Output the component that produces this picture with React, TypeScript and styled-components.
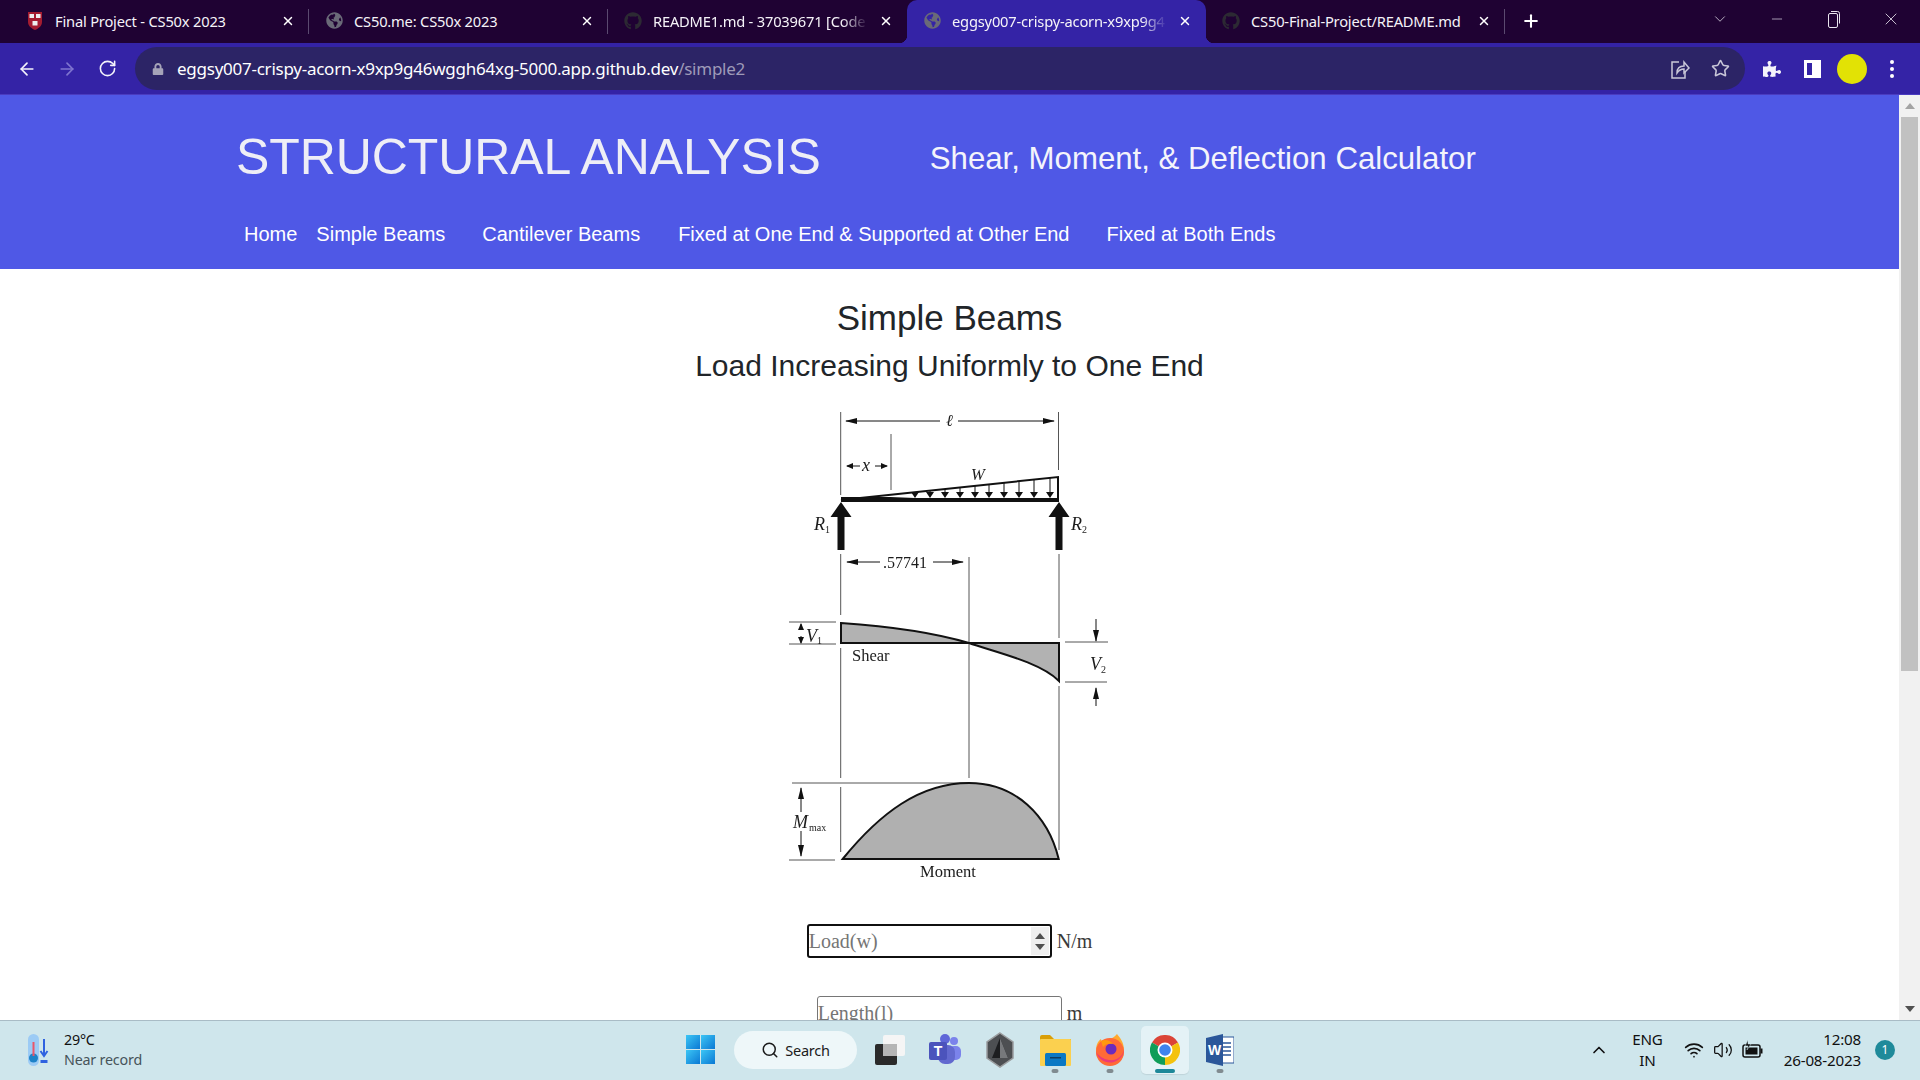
import React, { FC, ReactNode } from 'react'
import styled, { createGlobalStyle } from 'styled-components'
import { ArrowLeft, ArrowRight, RotateCw, Star, X, Plus, Minus, ChevronDown, ChevronUp, Search, Wifi, Volume2 } from 'lucide-react'
import { FaGithub, FaGlobeAmericas, FaLock, FaPuzzlePiece } from 'react-icons/fa'

const GlobalStyle = createGlobalStyle`
  html, body {
    margin: 0;
    padding: 0;
    overflow: hidden;
  }
  * {
    box-sizing: border-box;
  }
`

const Screen = styled.div`
  width: 1920px;
  height: 1080px;
  display: flex;
  flex-direction: column;
  overflow: hidden;
  background: white;
`

/* browser chrome */

const TabStrip = styled.div`
  height: 43px;
  flex: none;
  display: flex;
  align-items: stretch;
  padding-left: 10px;
  background: #1f0233;
  color: white;
`

const Tab = styled.div<{ $active?: boolean }>`
  position: relative;
  width: 299px;
  display: flex;
  align-items: center;
  padding: 0 12px 2px 16px;
  gap: 11px;
  background: ${p => (p.$active ? '#3423a6' : 'transparent')};
  border-radius: ${p => (p.$active ? '10px 10px 0 0' : '0')};
  ${p => p.$active && `
    &::before, &::after {
      content: '';
      position: absolute;
      bottom: 0;
      width: 8px;
      height: 8px;
    }
    &::before {
      left: -8px;
      background: radial-gradient(circle at 0 0, #1f0233 8px, #3423a6 8.5px);
    }
    &::after {
      right: -8px;
      background: radial-gradient(circle at 100% 0, #1f0233 8px, #3423a6 8.5px);
    }
  `}
`

const TabDivider = styled.span`
  position: absolute;
  right: 0;
  top: 9px;
  height: 25px;
  width: 1px;
  background: #5b4a70;
`

const Favicon = styled.span<{ $color?: string }>`
  width: 18px;
  flex: none;
  display: flex;
  justify-content: center;
  color: ${p => p.$color || '#6a6a78'};
`

const TabTitle = styled.span<{ $fade?: boolean }>`
  flex: 1;
  overflow: hidden;
  white-space: nowrap;
  font: 14.7px "Noto Sans", sans-serif;
  letter-spacing: -0.2px;
  color: #f5f3f8;
  ${p => p.$fade && `
    -webkit-mask-image: linear-gradient(to right, black 88%, transparent 100%);
    mask-image: linear-gradient(to right, black 88%, transparent 100%);
  `}
`

const TabClose = styled.span`
  width: 14px;
  flex: none;
  display: flex;
  justify-content: center;
  margin-right: 2px;
`

const NewTab = styled.span`
  margin-left: 16px;
  padding-bottom: 2px;
  display: flex;
  align-items: center;
`

const WindowControls = styled.div`
  margin-left: auto;
  display: flex;
  align-items: center;
  padding: 0 1px 5px 0;
`

const WindowButton = styled.span`
  width: 57px;
  display: flex;
  justify-content: center;
  color: #e8e4ee;
`

const Toolbar = styled.div`
  height: 52px;
  flex: none;
  display: flex;
  align-items: center;
  padding: 0 7px;
  background: #3423a6;
  border-bottom: 1px solid #4a3cc0;
  color: white;
`

const ToolButton = styled.span<{ $dim?: boolean }>`
  width: 40px;
  flex: none;
  display: flex;
  justify-content: center;
  align-items: center;
  color: ${p => (p.$dim ? '#7f75cf' : '#f4f3fb')};
`

const Omnibox = styled.div`
  width: 1610px;
  height: 43px;
  margin: 0 7px 0 8px;
  display: flex;
  align-items: center;
  padding: 0 5px 0 16px;
  border-radius: 22px;
  background: #2c2466;
`

const LockIcon = styled.span`
  width: 12px;
  display: flex;
  color: #a5a3b8;
  margin-left: 1px;
  margin-right: 13px;
`

const Url = styled.span`
  flex: 1;
  font: 17px "Noto Sans", sans-serif;
  letter-spacing: -0.25px;
  color: white;
  white-space: nowrap;
`

const UrlPath = styled.span`
  color: #9e9ab8;
`

const OmniIcon = styled.span`
  width: 40px;
  display: flex;
  justify-content: center;
  color: #c9c7d8;
`

const Avatar = styled.span`
  width: 30px;
  height: 30px;
  border-radius: 50%;
  background: #e2e205;
`

const Kebab = styled.span`
  width: 4px;
  height: 4px;
  border-radius: 50%;
  background: white;
  box-shadow: 0 -7px 0 white, 0 7px 0 white;
`

/* page */

const Viewport = styled.div`
  flex: 1;
  min-height: 0;
  display: flex;
`

const Page = styled.div`
  flex: 1;
  min-width: 0;
  overflow: hidden;
`

const Header = styled.header`
  height: 174px;
  padding-top: 24px;
  background: #4f58e6;
  color: white;
  font-family: "Liberation Sans", Arial, sans-serif;
`

const TitleRow = styled.div`
  height: 76px;
  display: flex;
  align-items: center;
  gap: 109px;
  padding-left: 236px;
`

const Title = styled.div`
  font-size: 50px;
  line-height: 60px;
  letter-spacing: -0.08px;
  color: #eeeef6;
  white-space: nowrap;
`

const Subtitle = styled.div`
  margin-top: 3px;
  font-size: 31.2px;
  white-space: nowrap;
  color: #f4f4fb;
`

const Nav = styled.nav`
  height: 40px;
  margin-top: 19px;
  padding-left: 244px;
  display: flex;
  align-items: center;
`

const NavLink = styled.a<{ $gap: number }>`
  margin-left: ${p => p.$gap}px;
  font-size: 20px;
  color: white;
  white-space: nowrap;
`

const Main = styled.main`
  padding-top: 27px;
  display: flex;
  flex-direction: column;
  align-items: center;
  font-family: "Liberation Sans", Arial, sans-serif;
  color: #212529;
`

const PageHeading = styled.h1`
  margin: 0;
  font-size: 35px;
  line-height: 44px;
  font-weight: 400;
`

const SubHeading = styled.h2`
  margin: 8px 0 0;
  font-size: 30px;
  line-height: 36px;
  font-weight: 400;
`

const DiagramSvg = styled.svg`
  display: block;
  margin-top: 16px;
  filter: blur(0.3px);
  font-family: "Liberation Serif", "Times New Roman", serif;
`

const Field = styled.div<{ $first?: boolean }>`
  margin-top: ${p => (p.$first ? 34 : 38)}px;
  display: flex;
  align-items: center;
  gap: 5px;
  font: 20px "Liberation Serif", "Times New Roman", serif;
  color: #3a3a3a;
`

const InputWrap = styled.span`
  position: relative;
  display: block;
`

const NumberInput = styled.input<{ $focused?: boolean }>`
  display: block;
  width: 245px;
  height: 34px;
  padding: 0;
  font: 20px "Liberation Serif", "Times New Roman", serif;
  background: white;
  border-radius: 3px;
  outline: none;
  appearance: textfield;
  border: ${p => (p.$focused ? '2.5px solid #101010' : '1px solid #767676')};
  &::placeholder {
    color: #757575;
  }
  &::-webkit-inner-spin-button {
    appearance: none;
  }
`

const SpinBox = styled.span`
  position: absolute;
  top: 3px;
  right: 3px;
  bottom: 3px;
  width: 18px;
  display: flex;
  flex-direction: column;
  align-items: center;
  justify-content: center;
  gap: 5px;
  background: #efefef;
  color: #505050;
`

const Scrollbar = styled.div`
  width: 21px;
  flex: none;
  display: flex;
  flex-direction: column;
  background: #f1f1f1;
`

const ScrollArrow = styled.div`
  height: 22px;
  flex: none;
  display: flex;
  align-items: center;
  justify-content: center;
`

const ScrollThumb = styled.div`
  height: 554px;
  margin: 0 2px;
  background: #c1c1c1;
`

const ScrollSpacer = styled.div`
  flex: 1;
`

/* taskbar */

const Taskbar = styled.footer`
  height: 60px;
  flex: none;
  display: flex;
  align-items: center;
  padding-bottom: 2px;
  background: #cfe6ec;
  border-top: 1px solid #a9bcc6;
  font-family: "Noto Sans", sans-serif;
  color: #111;
`

const Weather = styled.div`
  width: 676px;
  flex: none;
  display: flex;
  align-items: center;
  gap: 13px;
  padding-left: 27px;
`

const WeatherText = styled.div`
  font-size: 14.3px;
  line-height: 20px;
  letter-spacing: -0.2px;
`

const WeatherNote = styled.div`
  color: #47545a;
`

const TaskIcons = styled.div`
  display: flex;
  align-items: center;
  gap: 7px;
`

const TaskSlot = styled.div<{ $active?: boolean }>`
  position: relative;
  width: 48px;
  height: 48px;
  display: flex;
  align-items: center;
  justify-content: center;
  border-radius: 5px;
  background: ${p => (p.$active ? '#e4f2f6' : 'transparent')};
  box-shadow: ${p => (p.$active ? '0 1px 1px rgba(0,0,0,.08)' : 'none')};
`

const RunDot = styled.span<{ $active?: boolean }>`
  position: absolute;
  bottom: 1px;
  left: 50%;
  transform: translateX(-50%);
  height: 4px;
  border-radius: 2px;
  width: ${p => (p.$active ? 20 : 7)}px;
  background: ${p => (p.$active ? '#1d8899' : '#808b90')};
`

const SearchPill = styled.div`
  width: 123px;
  height: 38px;
  margin: 0 2px 0 3px;
  display: flex;
  align-items: center;
  justify-content: center;
  gap: 6px;
  border-radius: 19px;
  background: #eef7f9;
  font-size: 14.5px;
  letter-spacing: -0.2px;
  color: #1b1b1b;
`

const Tray = styled.div`
  margin-left: auto;
  display: flex;
  align-items: center;
  padding-right: 25px;
`

const TrayChevron = styled.span`
  display: flex;
  margin-right: 23px;
`

const TrayStack = styled.div<{ $right?: boolean }>`
  font-size: 15.2px;
  line-height: 21px;
  letter-spacing: -0.2px;
  text-align: ${p => (p.$right ? 'right' : 'center')};
`

const TrayGlyphs = styled.div`
  display: flex;
  align-items: center;
  gap: 9px;
  margin: 0 20px 0 21px;
`

const Badge = styled.span`
  width: 20px;
  height: 20px;
  margin-left: 14px;
  border-radius: 50%;
  background: #1f8a9a;
  color: white;
  font-size: 12px;
  display: flex;
  align-items: center;
  justify-content: center;
`

/* drawings */

const HarvardShield = () => (
  <svg width="16" height="20" viewBox="0 0 16 20">
    <path d="M1 1h14v10c0 4-3.5 6.5-7 8-3.5-1.500-7-4-7-8z" fill="#a51c30" />
    <rect x="2.500" y="3" width="4.500" height="4" fill="#eee" />
    <rect x="9" y="3" width="4.500" height="4" fill="#eee" />
    <rect x="5.500" y="10" width="5" height="4.500" fill="#eee" />
  </svg>
)

const RestoreIcon = () => (
  <svg width="14" height="20" viewBox="0 0 14 20" fill="none" stroke="currentColor" strokeWidth="1">
    <rect x="1.500" y="4.500" width="9" height="14" rx="1.500" />
    <path d="M4 2.500h6.500a2 2 0 0 1 2 2v10" />
  </svg>
)

const ShareIcon = () => (
  <svg width="20" height="22" viewBox="0 0 20 22" fill="none" stroke="currentColor" strokeWidth="1.500">
    <path d="M9 4H2v16h13v-6" />
    <path d="M7 15c0-5 3-7 7-7V4l5 6-5 5v-4c-3 0-5 1-7 4z" />
  </svg>
)

const SidePanelIcon = () => (
  <svg width="17" height="18" viewBox="0 0 17 18">
    <path d="M0 0h17v18H0zM3 3v12h5V3z" fill="white" fillRule="evenodd" />
  </svg>
)

const WeatherIcon = () => (
  <svg width="24" height="34" viewBox="0 0 24 34">
    <rect x="1" y="1" width="11" height="32" rx="5.500" fill="#9ccbf5" />
    <circle cx="6.500" cy="25" r="4.500" fill="#1c82c8" />
    <rect x="5.500" y="9" width="2" height="14" fill="#e9566a" />
    <path d="M17 6v16M13.500 18l3.500 5 3.500-5" stroke="#2f62e0" strokeWidth="2" fill="none" />
    <rect x="13.500" y="27" width="7" height="3" fill="#2f62e0" />
  </svg>
)

const WindowsLogo = () => (
  <svg width="29" height="29" viewBox="0 0 29 29">
    <defs>
      <linearGradient id="winBlue" x1="0" y1="0" x2="1" y2="1">
        <stop offset="0" stopColor="#3cc6f5" />
        <stop offset="1" stopColor="#0a78d4" />
      </linearGradient>
    </defs>
    <rect x="0" y="0" width="14" height="14" fill="url(#winBlue)" />
    <rect x="15" y="0" width="14" height="14" fill="url(#winBlue)" />
    <rect x="0" y="15" width="14" height="14" fill="url(#winBlue)" />
    <rect x="15" y="15" width="14" height="14" fill="url(#winBlue)" />
  </svg>
)

const TaskViewIcon = () => (
  <svg width="30" height="30" viewBox="0 0 30 30">
    <rect x="0" y="9" width="22" height="21" rx="2" fill="#2a2a2a" />
    <rect x="8" y="0" width="22" height="21" rx="2" fill="#f5f5f5" />
    <rect x="8" y="9" width="14" height="12" fill="#b5b5b5" />
  </svg>
)

const TeamsIcon = () => (
  <svg width="32" height="32" viewBox="0 0 32 32">
    <circle cx="25" cy="7" r="4" fill="#7b83eb" />
    <rect x="20" y="12" width="12" height="14" rx="5" fill="#7b83eb" />
    <circle cx="16" cy="5" r="5" fill="#5f67d8" />
    <rect x="9" y="11" width="17" height="19" rx="7" fill="#6269cf" />
    <rect x="0" y="8" width="18" height="18" rx="2" fill="#4b53bc" />
    <text x="9" y="22" textAnchor="middle" fontSize="14" fontWeight="700" fill="white" fontFamily="Liberation Sans">T</text>
  </svg>
)

const HexAppIcon = () => (
  <svg width="30" height="36" viewBox="0 0 30 36">
    <path d="M15 1l13 9v16l-13 9-13-9V10z" fill="#4d4f52" stroke="#9a9c9e" strokeWidth="1.500" />
    <path d="M15 6l-8 20h16z" fill="#1d1e20" />
    <path d="M15 6l8 20h-8z" fill="#77797c" />
  </svg>
)

const FolderIcon = () => (
  <svg width="31" height="32" viewBox="0 0 31 32">
    <path d="M0 3a2 2 0 0 1 2-2h8l4 4h17v4H0z" fill="#d99e07" />
    <rect x="0" y="5" width="31" height="27" rx="1" fill="#fbd04f" />
    <rect x="5" y="19" width="21" height="13" rx="1.500" fill="#0a78c4" />
    <rect x="10" y="23" width="11" height="1.500" fill="#0d3c61" />
  </svg>
)

const FirefoxIcon = () => (
  <svg width="30" height="32" viewBox="0 0 30 32">
    <path d="M22 0c2 3 7 7 7 17a14 14 0 1 1-28 0C1 11 3 7 6 5c0 2 1 3 2 4 3-4 9-3 14-9z" fill="#ffa92f" />
    <circle cx="15" cy="18" r="14" fill="#ff6a37" />
    <path d="M1 18c3 8 10 12 18 10 6-2 10-7 10-13-1 8-8 12-15 11-6-1-10-4-13-8z" fill="#ea3a7a" />
    <circle cx="16" cy="15" r="5.500" fill="#6b2bbd" />
    <path d="M6 7c4-2 9-1 12 3-4-1-8 0-10 3z" fill="#ff980e" />
  </svg>
)

const ChromeIcon = () => (
  <svg width="30" height="30" viewBox="0 0 30 30">
    <path d="M15 15L2 7.500A15 15 0 0 1 28 7.500z" fill="#db4437" />
    <path d="M15 15L28 7.500A15 15 0 0 1 15 30z" fill="#f4c20d" />
    <path d="M15 15L15 30A15 15 0 0 1 2 7.500z" fill="#0f9d58" />
    <circle cx="15" cy="15" r="7.500" fill="white" />
    <circle cx="15" cy="15" r="5.800" fill="#3f83ee" />
  </svg>
)

const WordIcon = () => (
  <svg width="28" height="32" viewBox="0 0 28 32">
    <rect x="11" y="3" width="17" height="26" fill="white" stroke="#2b579a" strokeWidth="1" />
    <path d="M15 9h10M15 13h10M15 17h10M15 21h10" stroke="#2b579a" strokeWidth="1.500" />
    <path d="M0 4L17 0v32L0 28z" fill="#2b579a" />
    <text x="8.500" y="21" textAnchor="middle" fontSize="14" fontWeight="700" fill="white" fontFamily="Liberation Sans">W</text>
  </svg>
)

const BatteryIcon = () => (
  <svg width="22" height="20" viewBox="0 0 22 20">
    <rect x="1" y="5" width="17" height="12" rx="2" fill="none" stroke="#111" strokeWidth="1.500" />
    <rect x="3.500" y="7.500" width="12" height="7" fill="#111" />
    <rect x="18.500" y="8.500" width="2" height="5" fill="#111" />
    <path d="M6 0L3 6h3l-1 4 4-6H6z" fill="#111" stroke="#cfe6ec" strokeWidth="0.500" />
  </svg>
)

const ArrowDefs = () => (
  <defs>
    <marker id="head" markerUnits="userSpaceOnUse" markerWidth="12" markerHeight="6" refX="11" refY="3" orient="auto-start-reverse">
      <path d="M0 0L12 3 0 6z" fill="#111" />
    </marker>
    <marker id="smallHead" markerUnits="userSpaceOnUse" markerWidth="7" markerHeight="6" refX="6" refY="3" orient="auto-start-reverse">
      <path d="M0 0L7 3 0 6z" fill="#111" />
    </marker>
  </defs>
)

const loadArrows = [145, 160, 175, 190, 205, 219, 234, 249, 264, 280]

const sloped = (x: number) => 100 - ((x - 71) / 217) * 23

const Diagram = () => (
  <DiagramSvg width="360" height="490" viewBox="0 0 360 490">
    <ArrowDefs />
    <g stroke="#555" strokeWidth="1" fill="none">
      <path d="M70.700 12V95M288.500 12V70M121 34V90" />
      <path d="M70.700 154V215M70.700 248V378M70.700 387V452" />
      <path d="M289 154V238M289 286V450" />
      <path d="M199 157V378" />
      <path d="M19 222H66M19 244H66M295 242H338M295 282H337" />
      <path d="M22 383H199M19 460H65" />
    </g>
    <g stroke="#111" strokeWidth="1" fill="none">
      <path d="M170 21H76" markerEnd="url(#head)" />
      <path d="M188 21H284" markerEnd="url(#head)" />
      <path d="M90 66H77" markerEnd="url(#smallHead)" />
      <path d="M105 66H117" markerEnd="url(#smallHead)" />
      <path d="M110 162H77" markerEnd="url(#head)" />
      <path d="M163 162H193" markerEnd="url(#head)" />
      <path d="M31 230V224" markerEnd="url(#smallHead)" />
      <path d="M31 236V243" markerEnd="url(#smallHead)" />
      <path d="M326 219V241" markerEnd="url(#head)" />
      <path d="M326 306V288" markerEnd="url(#head)" />
      <path d="M31 412V388" markerEnd="url(#head)" />
      <path d="M31 431V456" markerEnd="url(#head)" />
    </g>
    <path d="M71 100L288 77V100z" fill="white" stroke="#111" strokeWidth="2" />
    <rect x="71" y="98" width="218" height="4" fill="#111" />
    <path d="M71 100L145 97H71z" fill="#111" />
    {loadArrows.map(x => (
      <g key={x}>
        <path d={`M${x} ${sloped(x)}V94`} stroke="#111" strokeWidth="1" />
        <path d={`M${x - 4} 92H${x + 4}L${x} 98z`} fill="#111" />
      </g>
    ))}
    <path d="M71 102L60.500 117H67.500V150H74.500V117H81.500z" fill="#111" />
    <path d="M289 102L278.500 117H285.500V150H292.500V117H299.500z" fill="#111" />
    <path d="M71 223C115 226 165 233 199 243H71zM199 243C225 252 270 262 289 281V243z" fill="#b2b2b2" stroke="#111" strokeWidth="2" />
    <path d="M72.700 459C110 413 150 383 199 383C245 383 278 415 288.700 459z" fill="#b0b0b0" stroke="#111" strokeWidth="2" />
    <g fill="#1c1c1c" fontSize="16.500">
      <text x="176" y="26" fontStyle="italic">ℓ</text>
      <text x="92" y="71" fontStyle="italic" fontSize="18">x</text>
      <text x="201" y="80" fontStyle="italic">W</text>
      <text x="44" y="130" fontStyle="italic" fontSize="18">R</text>
      <text x="55" y="133" fontSize="10">1</text>
      <text x="301" y="130" fontStyle="italic" fontSize="18">R</text>
      <text x="312" y="133" fontSize="10">2</text>
      <text x="113" y="168" fontSize="16">.57741</text>
      <text x="36" y="242" fontStyle="italic" fontSize="18">V</text>
      <text x="47" y="244" fontSize="10">1</text>
      <text x="82" y="261">Shear</text>
      <text x="320" y="270" fontStyle="italic" fontSize="18">V</text>
      <text x="331" y="273" fontSize="10">2</text>
      <text x="23" y="428" fontStyle="italic" fontSize="18">M</text>
      <text x="39" y="431" fontSize="10">max</text>
      <text x="150" y="477">Moment</text>
    </g>
  </DiagramSvg>
)

const ScrollTriangle: FC<{ down?: boolean; color: string }> = ({ down, color }) => (
  <svg width="10" height="6" viewBox="0 0 10 6">
    <path d={down ? 'M0 0H10L5 6z' : 'M0 6H10L5 0z'} fill={color} />
  </svg>
)

interface TabInfo {
  title: string
  icon: ReactNode
  active?: boolean
  fade?: boolean
  divider?: boolean
}

const tabs: TabInfo[] = [
  { title: 'Final Project - CS50x 2023', icon: <HarvardShield />, divider: true },
  { title: 'CS50.me: CS50x 2023', icon: <FaGlobeAmericas size={17} />, divider: true },
  { title: 'README1.md - 37039671 [Code', icon: <FaGithub size={18} color="#2c2a33" />, fade: true },
  { title: 'eggsy007-crispy-acorn-x9xp9g4', icon: <FaGlobeAmericas size={17} />, active: true, fade: true },
  { title: 'CS50-Final-Project/README.md', icon: <FaGithub size={18} color="#2c2a33" />, divider: true }
]

const navItems = [
  { label: 'Home', gap: 0 },
  { label: 'Simple Beams', gap: 19 },
  { label: 'Cantilever Beams', gap: 37 },
  { label: 'Fixed at One End & Supported at Other End', gap: 38 },
  { label: 'Fixed at Both Ends', gap: 37 }
]

const App = () => (
  <Screen>
    <GlobalStyle />
    <TabStrip>
      {tabs.map(tab => (
        <Tab key={tab.title} $active={tab.active}>
          <Favicon>{tab.icon}</Favicon>
          <TabTitle $fade={tab.fade}>{tab.title}</TabTitle>
          <TabClose><X size={14} strokeWidth={2.5} /></TabClose>
          {tab.divider && <TabDivider />}
        </Tab>
      ))}
      <NewTab><Plus size={20} strokeWidth={2.5} /></NewTab>
      <WindowControls>
        <WindowButton><ChevronDown size={18} strokeWidth={1} /></WindowButton>
        <WindowButton><Minus size={16} strokeWidth={1} /></WindowButton>
        <WindowButton><RestoreIcon /></WindowButton>
        <WindowButton><X size={20} strokeWidth={1} /></WindowButton>
      </WindowControls>
    </TabStrip>
    <Toolbar>
      <ToolButton><ArrowLeft size={20} /></ToolButton>
      <ToolButton $dim><ArrowRight size={20} /></ToolButton>
      <ToolButton><RotateCw size={19} /></ToolButton>
      <Omnibox>
        <LockIcon><FaLock size={12} /></LockIcon>
        <Url>
          eggsy007-crispy-acorn-x9xp9g46wggh64xg-5000.app.github.dev
          <UrlPath>/simple2</UrlPath>
        </Url>
        <OmniIcon><ShareIcon /></OmniIcon>
        <OmniIcon><Star size={19} /></OmniIcon>
      </Omnibox>
      <ToolButton><FaPuzzlePiece size={18} /></ToolButton>
      <ToolButton><SidePanelIcon /></ToolButton>
      <ToolButton><Avatar /></ToolButton>
      <ToolButton><Kebab /></ToolButton>
    </Toolbar>
    <Viewport>
      <Page>
        <Header>
          <TitleRow>
            <Title>STRUCTURAL ANALYSIS</Title>
            <Subtitle>Shear, Moment, &amp; Deflection Calculator</Subtitle>
          </TitleRow>
          <Nav>
            {navItems.map(item => (
              <NavLink key={item.label} $gap={item.gap}>{item.label}</NavLink>
            ))}
          </Nav>
        </Header>
        <Main>
          <PageHeading>Simple Beams</PageHeading>
          <SubHeading>Load Increasing Uniformly to One End</SubHeading>
          <Diagram />
          <Field $first>
            <InputWrap>
              <NumberInput type="number" placeholder="Load(w)" $focused />
              <SpinBox>
                <ScrollTriangle color="#505050" />
                <ScrollTriangle down color="#505050" />
              </SpinBox>
            </InputWrap>
            N/m
          </Field>
          <Field>
            <InputWrap>
              <NumberInput type="number" placeholder="Length(l)" />
            </InputWrap>
            m
          </Field>
        </Main>
      </Page>
      <Scrollbar>
        <ScrollArrow><ScrollTriangle color="#a3a3a3" /></ScrollArrow>
        <ScrollThumb />
        <ScrollSpacer />
        <ScrollArrow><ScrollTriangle down color="#505050" /></ScrollArrow>
      </Scrollbar>
    </Viewport>
    <Taskbar>
      <Weather>
        <WeatherIcon />
        <WeatherText>
          29°C
          <WeatherNote>Near record</WeatherNote>
        </WeatherText>
      </Weather>
      <TaskIcons>
        <TaskSlot><WindowsLogo /></TaskSlot>
        <SearchPill><Search size={18} />Search</SearchPill>
        <TaskSlot><TaskViewIcon /></TaskSlot>
        <TaskSlot><TeamsIcon /></TaskSlot>
        <TaskSlot><HexAppIcon /></TaskSlot>
        <TaskSlot><FolderIcon /><RunDot /></TaskSlot>
        <TaskSlot><FirefoxIcon /><RunDot /></TaskSlot>
        <TaskSlot $active><ChromeIcon /><RunDot $active /></TaskSlot>
        <TaskSlot><WordIcon /><RunDot /></TaskSlot>
      </TaskIcons>
      <Tray>
        <TrayChevron><ChevronUp size={20} /></TrayChevron>
        <TrayStack>ENG<br />IN</TrayStack>
        <TrayGlyphs>
          <Wifi size={20} />
          <Volume2 size={20} strokeWidth={1.500} />
          <BatteryIcon />
        </TrayGlyphs>
        <TrayStack $right>12:08<br />26-08-2023</TrayStack>
        <Badge>1</Badge>
      </Tray>
    </Taskbar>
  </Screen>
)

export default App
